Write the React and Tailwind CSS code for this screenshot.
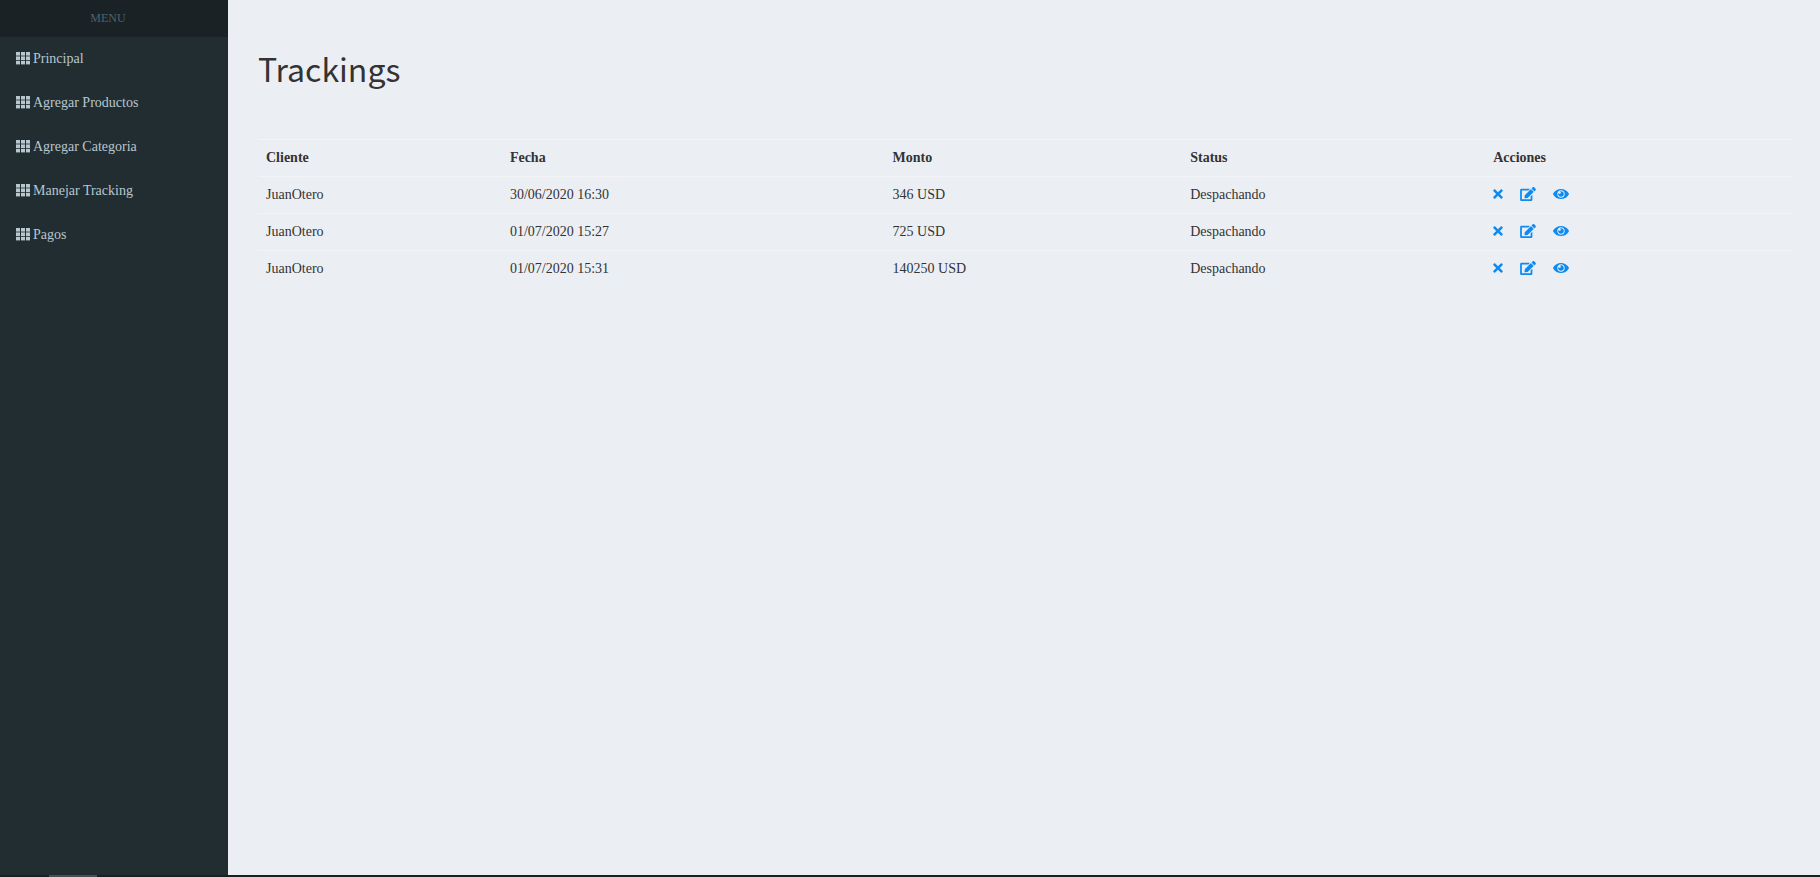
import { FaEdit, FaTimes } from "react-icons/fa";

const menu = [
  "Principal",
  "Agregar Productos",
  "Agregar Categoria",
  "Manejar Tracking",
  "Pagos",
];

const columns = [
  { label: "Cliente", width: "w-[15.9%]" },
  { label: "Fecha", width: "w-[24.95%]" },
  { label: "Monto", width: "w-[19.4%]" },
  { label: "Status", width: "w-[19.75%]" },
  { label: "Acciones", width: "w-[20%]" },
];

const trackings = [
  { cliente: "JuanOtero", fecha: "30/06/2020 16:30", monto: "346 USD", status: "Despachando" },
  { cliente: "JuanOtero", fecha: "01/07/2020 15:27", monto: "725 USD", status: "Despachando" },
  { cliente: "JuanOtero", fecha: "01/07/2020 15:31", monto: "140250 USD", status: "Despachando" },
];

function GridIcon() {
  return (
    <svg viewBox="0 0 14 14" className="size-3.5 shrink-0" fill="currentColor" aria-hidden="true">
      {[0, 5, 10].map((x) => (
        <g key={x}>
          <rect x={x} y="0" width="4" height="3.6" />
          <rect x={x} y="4.4" width="4" height="3.6" />
          <rect x={x} y="8.8" width="4" height="3.6" />
        </g>
      ))}
    </svg>
  );
}

function EyeIcon() {
  return (
    <svg viewBox="0 0 576 512" className="h-3.5 w-4" fill="currentColor" aria-hidden="true">
      <path d="M569.354 231.631C512.969 135.949 407.81 72 288 72 168.14 72 63.004 135.994 6.646 231.631a47.999 47.999 0 0 0 0 48.739C63.031 376.051 168.19 440 288 440c119.86 0 224.996-63.994 281.354-159.631a47.997 47.997 0 0 0 0-48.738zM288 392c-75.162 0-136-60.827-136-136 0-75.162 60.826-136 136-136 75.162 0 136 60.826 136 136 0 75.162-60.826 136-136 136zm104-136c0 57.438-46.562 104-104 104s-104-46.562-104-104c0-17.708 4.431-34.379 12.236-48.973l-.001.032c0 23.651 19.173 42.823 42.824 42.823s42.824-19.173 42.824-42.823c0-23.651-19.173-42.824-42.824-42.824l-.032.001C253.621 156.431 270.292 152 288 152c57.438 0 104 46.562 104 104z" />
    </svg>
  );
}

function Sidebar() {
  return (
    <aside className="w-57 shrink-0 bg-[#222d32]">
      <h2 className="bg-[#1a2226] py-2.5 pr-3 text-center text-xs leading-[17px] text-[#4b646f]">MENU</h2>
      <nav>
        <ul>
          {menu.map((item) => (
            <li key={item}>
              <a href="#" className="flex items-center gap-[3px] px-4 py-3 text-[#b8c7ce]">
                <GridIcon />
                <span>{item}</span>
              </a>
            </li>
          ))}
        </ul>
      </nav>
    </aside>
  );
}

function Actions() {
  return (
    <div className="flex h-[18px] items-center gap-[17px] text-[#0d8bf2]">
      <a href="#" aria-label="Eliminar">
        <FaTimes className="h-3.5 w-2.5" />
      </a>
      <a href="#" aria-label="Editar">
        <FaEdit className="h-3.5 w-4" />
      </a>
      <a href="#" aria-label="Ver">
        <EyeIcon />
      </a>
    </div>
  );
}

export default function App() {
  return (
    <div className="flex min-h-screen flex-col bg-[#ebeff4] font-['Liberation_Serif',serif] text-sm leading-5 text-[#333333]">
      <div className="flex grow">
        <Sidebar />
        <main className="min-w-0 grow pt-12 pr-7 pl-[30px]">
          <h1 className="text-[32px] leading-10 font-['Noto_Sans_CJK_SC',sans-serif]">Trackings</h1>
          <table className="mt-[51px] w-full table-fixed border-collapse text-left">
            <thead>
              <tr className="border-t border-[#f2f4f7]">
                {columns.map((c) => (
                  <th key={c.label} scope="col" className={`${c.width} p-2 font-bold`}>
                    {c.label}
                  </th>
                ))}
              </tr>
            </thead>
            <tbody>
              {trackings.map((t) => (
                <tr key={t.fecha} className="border-t border-[#f2f4f7]">
                  <td className="p-2">{t.cliente}</td>
                  <td className="p-2">{t.fecha}</td>
                  <td className="p-2">{t.monto}</td>
                  <td className="p-2">{t.status}</td>
                  <td className="p-2 align-top">
                    <Actions />
                  </td>
                </tr>
              ))}
            </tbody>
          </table>
        </main>
      </div>
      <footer className="h-0.5 bg-[#1a1f22] pl-[49px]">
        <div className="h-full w-12 bg-[#4a4e50]" />
      </footer>
    </div>
  );
}
